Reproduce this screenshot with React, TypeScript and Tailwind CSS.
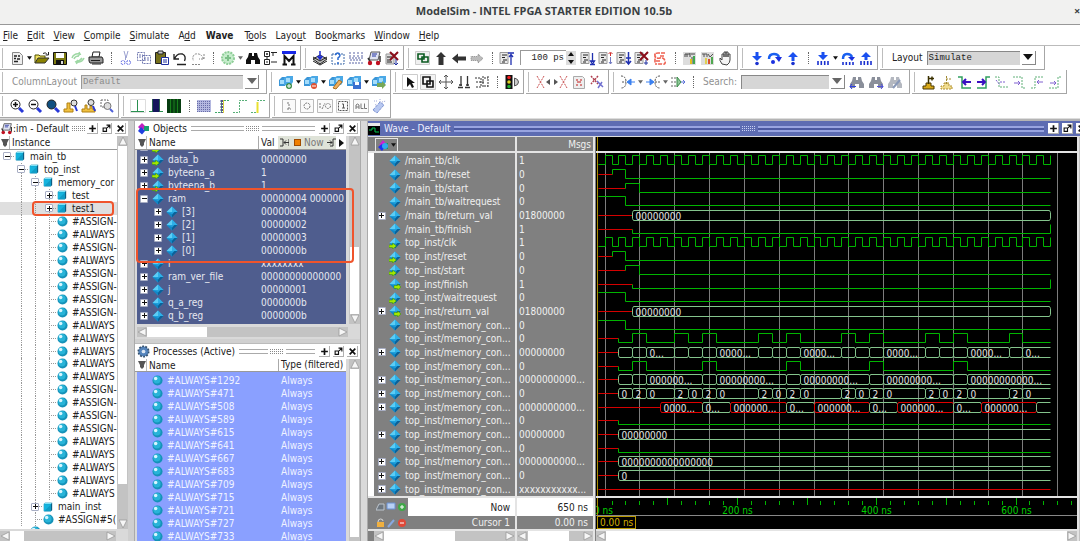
import React from "react";

/* ---------- small drawings ---------- */

const Svg = ({ children, size = 16 }: { children: React.ReactNode; size?: number }) => (
  <svg viewBox="0 0 16 16" width={size} height={size} fill="none" className="shrink-0">
    {children}
  </svg>
);

const Diamond = ({ port }: { port?: "in" | "out" }) => (
  <svg viewBox="0 0 12 12" width="12" height="12" className="shrink-0">
    <path d="M6 .5 11.5 6 6 11.5 .5 6Z" fill="#1ea0dc" />
    <path d="M6 .5 6 6 .5 6Z" fill="#5ccdf5" />
    <path d="M6 .5 11.5 6 6 6Z" fill="#2fb0e8" />
    <path d="M11.5 6 6 11.5 6 8.5 8.5 6Z" fill="#0b5f96" />
    <path d="M.5 6 6 11.5 6 8Z" fill="#1286c4" />
    {port === "in" && <path d="M0 8h3.500V6L7.500 9 3.500 12V10.500H0Z" fill="#a4e800" stroke="#2e8a10" strokeWidth=".5" />}
    {port === "out" && <path d="M5 7.500h3.500V6L12 9 8.500 12V10.500H5Z" fill="#a4e800" stroke="#2e8a10" strokeWidth=".5" />}
  </svg>
);

const Ball = () => (
  <svg viewBox="0 0 12 12" width="11" height="11" className="shrink-0">
    <circle cx="6" cy="6" r="5.5" fill="#1592b8" />
    <circle cx="5.4" cy="5.2" r="4" fill="#28b4d8" />
    <circle cx="4" cy="3.8" r="1.9" fill="#d8f6ff" />
  </svg>
);

const Cube = () => (
  <svg viewBox="0 0 12 12" width="10" height="10" className="shrink-0">
    <path d="M1 2 2.500 1H11v9l-1.500 1H1Z" fill="#0d5f84" />
    <path d="M1 2.500h8.500V11H1Z" fill="#16b4de" />
    <path d="M1 2.500 2.500 1H11L9.500 2.500Z" fill="#7fe2f8" />
    <path d="M9.500 3 1.500 11h8Z" fill="#0f9cc6" />
  </svg>
);

const Doc = ({ x = 2 }: { x?: number }) => (
  <>
    <path d={`M${x} 2.500h8v11h-8z`} fill="#e9e9e9" stroke="#999" />
    <path d={`M${x + 2} 5h5M${x + 2} 7.500h3M${x + 3} 10h4M${x + 2} 12h3`} stroke="#222" />
  </>
);
const Bino = ({ c }: { c: string }) => (
  <path d="M4 3h3v3h2V3h3l1 4 2 3v4h-5v-4H6v4H1v-4l2-3Z" fill={c} />
);
const Lens = ({ fill = "#fff" }: { fill?: string }) => (
  <>
    <path d="M10 10l4 4" stroke="#2838d8" strokeWidth="3" />
    <circle cx="6.500" cy="6.500" r="4.500" fill={fill} stroke="#222" />
  </>
);
const Cubes = () => (
  <>
    <path d="M1 6 4 3h5v6l-2 3H1Z" fill="#3a96d8" />
    <path d="M6 4l3-2h6v6l-2 3H6Z" fill="#4aa8e6" />
    <path d="M2 6h4v4H2zM8 4h4v4H8z" fill="#a4dcfa" />
  </>
);
const Edge = ({ c, d }: { c: string; d?: boolean }) => (
  <path d="M1 14.500h6.500V2.500H15" stroke={c} strokeDasharray={d ? "2 1" : undefined} />
);

const icons: Record<string, React.ReactNode> = {
  "New": <><path d="M3.500 2.500h7l3 3v9h-10z" fill="#eee" stroke="#888" /><path d="M5 6h3M9 6h2M5 8.500h2M8 9h3M5 11.500h4" stroke="#222" strokeWidth="1.500" /></>,
  "Open": <><path d="M1 13V5h4l1 1h5v2" stroke="#555500" fill="#f0e060" /><path d="M1 13l3-5h11l-4 5Z" fill="#8a8200" stroke="#333" /><path d="M9 3.500q3-2 4 1M11.500 5h3V2" stroke="#222" /></>,
  "Save": <><path d="M1.500 2.500h13v12h-13z" fill="#7c7a10" stroke="#111" /><path d="M4 3h8v5H4z" fill="#fff" /><path d="M4 10h8v4H4z" fill="#111" /><path d="M9 11h2v3H9z" fill="#ddd" /></>,
  "Reload": <path d="M2 8q2-5 8-4l-1-2M10 4l-2 2M14 8q-2 5-8 4l1 2M6 12l2-2M4 9q1-3 5-3M12 8q-2 3-5 3" stroke="#9ed8a4" strokeWidth="1.500" />,
  "Print": <><path d="M5 2h7l-1 5H4Z" fill="#fff" stroke="#222" /><path d="M1 7h13l1 2v4H2l-1-2Z" fill="#999" stroke="#222" /><path d="M3 10.500h9M4 14h9" stroke="#222" /></>,
  "Cut": <><path d="M6 1l2 7 2-7M7.500 7v3" stroke="#9aa0d0" /><circle cx="5" cy="12.500" r="2" stroke="#5560e0" strokeDasharray="2 1" /><circle cx="10.500" cy="12.500" r="2" stroke="#5560e0" strokeDasharray="2 1" /></>,
  "Copy": <path d="M1.500 2.500h7v8h-7zM6.500 5.500h8v8h-8zM3 5h4M3 7h3M8 8h5M8 10h5" stroke="#7078b0" strokeDasharray="2 1" />,
  "Paste": <><path d="M1.500 2.500h10v11h-10z" fill="#76701c" stroke="#222" /><path d="M4 1h5v3H4z" fill="#ccc" stroke="#222" /><path d="M7.500 7.500h7v7h-7z" fill="#fff" stroke="#2030a0" /><path d="M9 10h4M9 12h4" stroke="#2030a0" /></>,
  "Undo": <path d="M2 4v5h5M2.500 9q2-6 8-5 4 2 2 7M5 14.500h9" stroke="#222" strokeWidth="1.300" />,
  "Redo": <path d="M14 4v5H9M13.500 9q-2-6-8-5-4 2-2 7M2 14.500h9" stroke="#888" strokeDasharray="2 1" />,
  "Add": <><circle cx="8" cy="8" r="6" fill="#c5eccb" stroke="#8fce98" strokeDasharray="2 1" strokeWidth="2" /><path d="M8 5v6M5 8h6" stroke="#7cc088" strokeWidth="2" /></>,
  "Find": <Bino c="#111" />,
  "Expand hierarchy": <path d="M1.500 1.500h5v5h-5zM1.500 9.500h5v5h-5zM4 3v2M3 4h2M3 12h2M4 6v3M8 2.500h6M8 12h6M10 2v4" stroke="#222" />,
  "ModelSim": <><path d="M1 2.500h14" stroke="#1828e8" strokeWidth="3" /><path d="M3.500 14V6l4.500 5 4.500-5v8M1.500 14.500h4.500M10 14.500h4.500" stroke="#111" strokeWidth="2" /></>,
  "Compile": <><path d="M1 9l7-4 7 4-7 5Z" fill="#bbb" stroke="#222" /><path d="M1 11l7 4 7-4M1 7l7 4 7-4" stroke="#222" /><path d="M8 1v7M5.500 6 8 9l2.500-3" stroke="#1a28d0" strokeWidth="1.500" /></>,
  "Compile out of date": <><path d="M2 4h12v10H2z" stroke="#3b68a8" strokeDasharray="2 1" /><path d="M5 5q3-4 5 0 0 2-2 3v2M8 12v2" stroke="#2a6ad0" strokeWidth="1.500" /></>,
  "Compile all": <path d="M2 2v5M6 2v5M10 2v5M14 2v5M1 8h14M2 10h12M1 13h14" stroke="#5a65a5" strokeDasharray="2 1" />,
  "Simulate": <><path d="M5 2h9l-2 8H3Z" fill="#dfe3f2" stroke="#555" /><path d="M6 4h5M6 6h4" stroke="#2030a0" /><path d="M2 8l3 5M14 6v6" stroke="#333" strokeWidth="1.500" /><circle cx="4" cy="13" r="2.200" fill="#c01020" /><circle cx="12" cy="13" r="2.200" fill="#c01020" /></>,
  "End simulation": <><path d="M2 4h8v10H2z" fill="#ddd" stroke="#999" /><path d="M3 7h5M3 10h4M3 12h5" stroke="#222" /><path d="M6 2l8 8M14 2l-8 8" stroke="#8a0c18" strokeWidth="2" /><path d="M12 9v6M10 13l2 2 2-2" stroke="#2030a0" /></>,
  "Restart": <><path d="M.5 1.500h14v13H.5z" fill="#f0f0f0" stroke="#ccc" /><path d="M3 4h6v5H3zM7 7h6v5H7z" stroke="#0a5a20" strokeWidth="1.600" /></>,
  "Environment up": <path d="M8 2l5 5h-2.500v8h-5V7H3Z" fill="#333" />,
  "Back": <path d="M1 8.500l6-5v3h8v4H7v3Z" fill="#333" />,
  "Forward": <path d="M14 8.500l-5-4.500v2.500H2v4h7V13Z" fill="#bbb" stroke="#888" strokeDasharray="1 1" />,
  "Run length": <><Doc x={1} /><path d="M9 3h6M12 4v11M10 7l2-2.500 2 2.500" stroke="#2030b0" strokeWidth="1.300" /></>,
  "Run": <><Doc x={1} /><path d="M12.500 3v9M10 14.500h5M12.500 14l-2-3h4Z" stroke="#2030b0" strokeWidth="1.300" /></>,
  "Continue": <><Doc x={1} /><path d="M10.500 4l2-2 2 2M12.500 3v3" stroke="#d03030" /><path d="M12.500 7v7M11 12l1.500 2 1.500-2" stroke="#7078c0" /></>,
  "Run all": <><Doc x={1} /><path d="M12.500 2v12M10 11l2.500 3 2.500-3M10 8h5" stroke="#2030b0" strokeWidth="1.500" /></>,
  "Break": <><Doc x={1} /><path d="M6 2l8 8M14 2l-8 8" stroke="#8a0c18" strokeWidth="2" /><path d="M12 10v5M10 13h4" stroke="#2030a0" /></>,
  "Stop": <path d="M13 3H6Q2 3 3 6t5 2 5 3-3 3H3M12 6H7M4 11h5M3 3.500v10" stroke="#ee6050" strokeWidth="1.600" strokeDasharray="4 1" />,
  "Profile": <><path d="M1 2h13v13H1z" fill="#ddd" /><path d="M3 4v3M5 4v3M8 3v4M3 4h5M9 4h4M10 7v7" stroke="#444" /><path d="M8 9h2v5H8z" fill="#e0c020" /><path d="M11 6h2v8h-2z" fill="#40a850" /></>,
  "Memory profile": <><path d="M1 2h13v13H1z" fill="#ddd" /><path d="M2 4h5v3M4 4v3M8 4l2 3 3-3" stroke="#555" /><path d="M8 9h2v5H8z" fill="#d85030" /><path d="M11 7h2v7h-2z" fill="#50a850" /><path d="M5 8h2v6H5z" fill="#e0d050" /></>,
  "Pan": <path d="M4 14q-3-4-2-6l2 2V4h2v3V2h2v5V2h2v5V4h2v6q0 3-3 5Z" fill="#f4f4f4" stroke="#444" />,
  "Step into": <><path d="M6.500 2h3v4H13l-5 5-5-5h3.500Z" fill="#1a50f0" /><circle cx="8" cy="13.500" r="1.800" fill="#1a30d0" /></>,
  "Step over": <><path d="M2 9q0-5 5-5 4 0 5 3" stroke="#1a60f0" strokeWidth="2.500" /><path d="M8 7h7l-3 5Z" fill="#1a30e0" /><circle cx="6" cy="12" r="2" fill="#1a30e0" /></>,
  "Step out": <><path d="M8 2l5 5H9.500v4h-3V7H3Z" fill="#1a50f0" /><circle cx="8" cy="13.500" r="1.800" fill="#1a30d0" /></>,
  "Step into instance": <><path d="M6.500 2h3v3H13L8 10 3 5h3.500Z" fill="#1a50f0" /><path d="M3 11v4M6.300 11v4M9.700 11v4M13 11v4" stroke="#1a30d0" strokeWidth="1.600" /></>,
  "Step over instance": <><path d="M3 9q0-5 4-5 4 0 5 3" stroke="#1a60f0" strokeWidth="2.500" /><path d="M8 7h7l-3 4Z" fill="#1a30e0" /><path d="M3 12v3M6.300 12v3M9.700 12v3M13 12v3" stroke="#1a30d0" strokeWidth="1.600" /></>,
  "Step out instance": <><path d="M8 2l5 5H9.500v3h-3V7H3Z" fill="#1a50f0" /><path d="M3 11v4M6.300 11v4M9.700 11v4M13 11v4" stroke="#1a30d0" strokeWidth="1.600" /></>,
  "Add layer": <><Cubes /><circle cx="11" cy="12" r="3" fill="#3c8c48" /><path d="M11 10v4M9 12h4" stroke="#fff" /></>,
  "Remove layer": <><Cubes /><circle cx="11" cy="12" r="3" fill="#e05030" /><path d="M9 12h4" stroke="#fff" /></>,
  "Edit layer": <><Cubes /><path d="M5 14l6-8 3 2-6 7Z" fill="#f0b060" stroke="#a87020" /></>,
  "Save layer": <><Cubes /><path d="M7 8h8v7H7z" fill="#3a70d0" /><path d="M9 8h4v3H9z" fill="#fff" /></>,
  "Load layer": <><Cubes /><path d="M6 9h5V7l4 4-4 4v-2H6Z" fill="#78a858" /></>,
  "Select": <><path d="M.5.500h15v15H.5z" fill="#fff" stroke="#ccc" /><path d="M5 3v10l3-3 2 4 2-1-2-4h3Z" fill="#111" /></>,
  "Zoom area": <><path d="M.5.500h15v15H.5z" fill="#f2f2f2" stroke="#ccc" /><path d="M3 3h7v7H3zM7 7h6v6H7z" stroke="#111" strokeWidth="1.600" /></>,
  "Move": <path d="M8 1v14M1 8h14M6 3l2-2 2 2M6 13l2 2 2-2M3 6 1 8l2 2M13 6l2 2-2 2" stroke="#555" />,
  "Cursors": <path d="M5 2v10M11.500 2v10M2 13.500h5M9 13.500h5M3 11h3M10 11h3" stroke="#333" strokeWidth="1.300" />,
  "Stretch": <path d="M1 4h6v9H1M2 8h9M9 2v12M14 2v12M10 4h4M10 12h4" stroke="#333" strokeDasharray="2 1" />,
  "Stop wave": <><path d="M1.500 1h7v14h-7z" fill="#111" /><circle cx="5" cy="3.500" r="1.800" fill="#f02020" /><circle cx="5" cy="8" r="1.800" fill="#e0d020" /><circle cx="5" cy="12.500" r="1.800" fill="#20b030" /><path d="M10.500 4v8q4-1 4-4t-4-4Z" stroke="#555" fill="#ccc" /></>,
  "X previous": <><path d="M2 2l7 12M9 2 2 14" stroke="#c85050" strokeDasharray="2 1" /><path d="M15 5v6l-4-3Z" fill="#555" /></>,
  "X next": <><path d="M7 2l7 12M14 2 7 14" stroke="#c85050" strokeDasharray="2 1" /><path d="M1 5v6l4-3Z" fill="#555" /></>,
  "Show X": <><path d="M2.500 2.500h9l2 2v10h-11z" fill="#eee" stroke="#aaa" /><path d="M5 6h2M9 6h2M6 8h4M5 11h2M9 11h2" stroke="#d06060" strokeWidth="1.500" /></>,
  "X options": <><path d="M2 2l7 8M9 2 2 10" stroke="#b04050" strokeDasharray="2 1" strokeWidth="1.500" /><path d="M8 7l6 6M13 8l-4 6" stroke="#7070d0" strokeWidth="1.500" /></>,
  "Expand drivers": <><path d="M1 2q5 0 5 6t-5 6M2 8h4" stroke="#555" strokeDasharray="2 1" /><path d="M7 8l4-3v6ZM10 8h5" stroke="#3a80f0" fill="#3a80f0" /></>,
  "Expand readers": <><path d="M15 2q-5 0-5 6t5 6M10 8h5" stroke="#555" strokeDasharray="2 1" /><path d="M9 8 5 5v6ZM1 8h5" stroke="#3a80f0" fill="#3a80f0" /></>,
  "Expand both": <><path d="M1 4h5M1 8h5M1 12h5" stroke="#666" strokeDasharray="2 1" /><path d="M7 3v10l4-5Z" fill="#8ec898" stroke="#3a8a48" /><path d="M11 8h4M13 6l2 2-2 2" stroke="#5a70d8" /></>,
  "Find previous": <><Bino c="#8a8f9a" /><path d="M1 12.500h6M3 10l-2 2.500L3 15" stroke="#3040e0" /></>,
  "Find next": <><Bino c="#8a8f9a" /><path d="M9 12.500h6M13 10l2 2.500-2 2.500" stroke="#5050e0" /></>,
  "Find options": <><Bino c="#b4b8c0" /><path d="M6 14l7-8" stroke="#8898b8" strokeWidth="2" /></>,
  "Insert cursor": <><path d="M5 9h5v3h3v3H2v-3h3Z" fill="#d8a818" stroke="#4a3800" /><path d="M7.500 2v8M7 4.500h6M11 2.500v4" stroke="#3a3000" strokeWidth="1.500" /></>,
  "Delete cursor": <><path d="M5 9h5v3h3v3H2v-3h3Z" fill="#f0dc90" stroke="#b09030" strokeDasharray="2 1" /><path d="M7.500 2v8M7 5h6" stroke="#a08830" strokeDasharray="2 1" /></>,
  "Previous transition": <><path d="M1 3h4v11h9" stroke="#30a060" strokeWidth="1.500" /><path d="M6 8h8M9 5 6 8l3 3" stroke="#3a10c0" strokeWidth="2" /></>,
  "Next transition": <><path d="M15 3h-4v11H2" stroke="#30a060" strokeWidth="1.500" /><path d="M2 8h8M7 5l3 3-3 3" stroke="#3a10c0" strokeWidth="2" /></>,
  "Previous falling": <><path d="M2 3h4v10h9" stroke="#60b078" strokeDasharray="2 1" /><path d="M7 8h6M3 6l4 5" stroke="#8060d0" strokeDasharray="2 1" /></>,
  "Next falling": <><path d="M2 3h9v11h4" stroke="#60b078" strokeDasharray="2 1" /><path d="M3 9h6M7 7l2 2-2 2" stroke="#8060d0" /></>,
  "Previous rising": <><path d="M2 14h4V3h9" stroke="#60b078" strokeDasharray="2 1" /><path d="M8 8h6M10 6 8 8l2 2" stroke="#8060d0" /></>,
  "Next rising": <><path d="M2 14h9V3h4" stroke="#60b078" strokeDasharray="2 1" /><path d="M3 9h6M7 7l2 2-2 2" stroke="#8060d0" /></>,
  "Zoom in": <><Lens /><path d="M4 6.500h5M6.500 4v5" stroke="#111" strokeWidth="1.500" /></>,
  "Zoom out": <><Lens /><path d="M4 6.500h5" stroke="#111" strokeWidth="1.500" /></>,
  "Zoom full": <Lens fill="#0f4f80" />,
  "Zoom cursor": <><path d="M1 14h9v-3H7V5H4v6H1Z" fill="#f0c040" stroke="#b08010" /><circle cx="11" cy="5" r="3" stroke="#333" fill="#ddd" /><path d="M12 8l2 5" stroke="#2838d8" strokeWidth="2" /></>,
  "Zoom range": <><path d="M1 14h13v-3h-3V8H9v3H6V7H4v4H1Z" fill="#f0c040" stroke="#b08010" /><circle cx="10" cy="4.500" r="3" stroke="#333" fill="#ddd" /><path d="M12 8l2 5" stroke="#2838d8" strokeWidth="2" /></>,
  "Zoom selection": <><path d="M2 2h7v7H2z" stroke="#666" strokeDasharray="2 1" /><circle cx="8.500" cy="8" r="3.500" stroke="#777" fill="#ddd" /><path d="M11 11l3 3" stroke="#5060d8" strokeWidth="2" /></>,
  "Wave none": <><path d="M.5 1.500h15v13H.5z" fill="#fff" stroke="#ddd" /><path d="M1 13.500h13M7.500 2v12" stroke="#2a9050" /></>,
  "Wave block": <><path d="M1 13.500h14" stroke="#2a9050" /><path d="M4 1h8v13H4z" fill="#14145c" /><path d="M4.500 1v13M11.500 1v13" stroke="#2a6050" /></>,
  "Wave bars": <><path d="M1 1h14v14H1z" fill="#063c10" /><path d="M4.500 1v14M8 1v14M11.500 1v14" stroke="#18801c" /></>,
  "Pattern": <><path d="M1 2h14v12H1z" fill="#b4b8e0" /><path d="M1 3.500h14M1 5.500h14M1 7.500h14M1 9.500h14M1 11.500h14M1 13.500h14" stroke="#676ca8" strokeDasharray="1 1" /></>,
  "Edge pair": <><Edge c="#40a868" d /><path d="M8 2v13" stroke="#55558a" strokeWidth="3" strokeDasharray="2 1" /><path d="M9.500 2v13" stroke="#d8d040" /></>,
  "Edge rising": <Edge c="#58b078" d />,
  "Edge marked": <><Edge c="#58b078" d /><path d="M7.500 4v11" stroke="#e8e030" strokeWidth="2" /></>,
  "Inputs": <><path d="M1.500 1.500h13v13h-13z" fill="#fafafa" stroke="#bbb" /><path d="M6 5h2v6M6 11h4" stroke="#777" strokeDasharray="2 1" /></>,
  "Outputs": <><path d="M1.500 1.500h13v13h-13z" fill="#fafafa" stroke="#bbb" /><circle cx="8" cy="8" r="3" stroke="#777" strokeDasharray="2 1" /></>,
  "Inouts": <><path d="M.5 1.500h15v13H.5z" fill="#fafafa" stroke="#bbb" /><path d="M3 5v6M5 11l3-6" stroke="#777" strokeDasharray="2 1" /><circle cx="11" cy="8" r="2.500" stroke="#777" strokeDasharray="2 1" /></>,
  "Internals": <><path d="M1.500 1.500h13v13h-13z" fill="#fafafa" stroke="#ccc" /><path d="M3.500 3.500h9v9h-9z" stroke="#555" strokeDasharray="2 1" /><path d="M7 6h1.500v4M7 10h3" stroke="#555" /></>,
  "All": <><path d="M.5 1.500h15v13H.5z" fill="#fafafa" stroke="#bbb" /><path d="M3 11V7l1.500-1L6 7v4M3 9h3M8 5.500v5h2.500M11.500 5.500v5h2.500" stroke="#777" /></>,
  "Clear filter": <><path d="M2 12l7-8 4 3-7 8Z" fill="#b8c8f0" stroke="#7a90d0" strokeDasharray="3 1" /><path d="M3 3h3M9 1v3M11 4l4-1M4 7l2-1" stroke="#a0a8d8" strokeDasharray="1 1" /></>,
};

const Tool = ({ n }: { n: string }) => (
  <button title={n} className="flex h-[18px] w-[18px] shrink-0 items-center justify-center">
    <Svg>{icons[n]}</Svg>
  </button>
);
const Tools = ({ names }: { names: string[] }) => <>{names.map((n) => <Tool key={n} n={n} />)}</>;

const Caret = ({ c = "#111" }: { c?: string }) => (
  <span className="flex w-[7px] shrink-0 justify-center">
    <svg viewBox="0 0 6 4" width="5" height="4"><path d="M0 0h6L3 4Z" fill={c} /></svg>
  </span>
);
const Sep = () => (
  <span className="flex w-[12px] shrink-0 justify-center">
    <span className="h-[12px] w-px border-l border-dotted border-[#666]" />
  </span>
);
const Group = ({ children }: { children: React.ReactNode }) => (
  <div className="flex shrink-0 items-center border-r border-b border-[#a6a6a6] bg-white pr-[2px]">
    <span className="mr-[5px] h-[20px] w-[3px] shrink-0 border-r border-[#bdbdbd]" />
    {children}
  </div>
);
const DropArrow = ({ c = "#111" }: { c?: string }) => (
  <span className="pointer-events-none ml-[2px] flex h-[14px] w-[14px] shrink-0 items-center justify-center border-r border-b border-[#888] bg-white">
    <svg viewBox="0 0 10 6" width="10" height="6"><path d="M0 0h10L5 6Z" fill={c} /></svg>
  </span>
);

/* ---------- panel pieces ---------- */

const PanelButtons = () => (
  <span className="flex shrink-0 items-center gap-[3px]">
    {["M8 2v12M2 8h12", "M2 7h6v6H2zM8 2h6v6M14 2 9 7", "M3 3l10 10M13 3 3 13"].map((d, i) => (
      <button key={d} title={["Maximize", "Undock", "Close"][i]} className="flex h-[11px] w-[11px] items-center justify-center border-r border-b border-[#b0b0b0] bg-white">
        <Svg size={9}><path d={d} stroke="#111" strokeWidth={i === 1 ? 2 : 3} /></Svg>
      </button>
    ))}
  </span>
);

const Dots = ({ light }: { light?: boolean }) => (
  <svg width="14" height="5" className="shrink-0">
    {[0.5, 2.5, 4.5].map((y) => (
      <path key={y} d={`M0 ${y}h14`} stroke={light ? "#c8d0f4" : "#888"} strokeDasharray="1 1" />
    ))}
  </svg>
);
const Grip = ({ light }: { light?: boolean }) => {
  const bar = light ? "h-[6px] flex-1 border-y-2 border-[#98a4e0] bg-[#4a58a0]" : "h-[5px] flex-1 border-y border-[#aaa]";
  return (
    <span className="mx-[4px] flex flex-1 items-center gap-[2px]">
      <span className={bar} />
      <Dots light={light} />
      <span className={bar} />
    </span>
  );
};

const Arrow = ({ d }: { d: "up" | "down" | "left" | "right" }) => {
  const p = { up: "M5 1l4 8H1Z", down: "M5 9 1 1h8Z", left: "M1 5l8-4v8Z", right: "M9 5 1 1v8Z" }[d];
  return (
    <svg viewBox="0 0 10 10" width="10" height="10" className="shrink-0">
      <path d={p} fill="#f6f6f6" stroke="#999" strokeWidth=".8" />
    </svg>
  );
};
const HBar = ({ thumb }: { thumb: string }) => (
  <div className="flex h-[10px] shrink-0 items-center bg-[#c3c3c3]">
    <Arrow d="left" />
    <span className="flex h-full flex-1"><span className={thumb} /></span>
    <Arrow d="right" />
  </div>
);

const Expander = ({ open }: { open?: boolean }) => (
  <span className="flex h-[8px] w-[8px] shrink-0 items-center justify-center rounded-[1px] border border-[#a8aec4] bg-white">
    <svg width="5" height="5"><path d={open ? "M0 2.5h5" : "M0 2.5h5M2.5 0v5"} stroke="#111" /></svg>
  </span>
);
const FilterBox = () => (
  <span className="mr-[2px] flex h-full w-[10px] shrink-0 items-center justify-center border-r border-[#bbb]">
    <svg viewBox="0 0 8 8" width="8" height="8"><path d="M0 0h8L6 4v2L4 8 2 6V4Z" fill="#555" /></svg>
  </span>
);

/* ---------- data ---------- */

type Node = { t: string; d: number; k: "o" | "c" | "l"; sel?: boolean };
const proc = "SLSLSSSSLLLLLSSSSLLLLL".split("").map((c): Node => ({ t: c === "S" ? "#ASSIGN-" : "#ALWAYS", d: 3, k: "l" }));
const tree: Node[] = [
  { t: "main_tb", d: 0, k: "o" },
  { t: "top_inst", d: 1, k: "o" },
  { t: "memory_cor", d: 2, k: "o" },
  { t: "test", d: 3, k: "c" },
  { t: "test1", d: 3, k: "c", sel: true },
  ...proc,
  { t: "main_inst", d: 2, k: "c" },
  { t: "#ASSIGN#5(", d: 2, k: "l" },
];

const objects: [string, string, number, boolean?][] = [
  ["data_a", "00000000", 0, true],
  ["data_b", "00000000", 0, true],
  ["byteena_a", "1", 0, true],
  ["byteena_b", "1", 0, true],
  ["ram", "00000004 000000", 0],
  ["[3]", "00000004", 1],
  ["[2]", "00000002", 1],
  ["[1]", "00000003", 1],
  ["[0]", "0000000b", 1],
  ["i", "xxxxxxxx", 0],
  ["ram_ver_file", "00000000000000", 0],
  ["j", "00000001", 0],
  ["q_a_reg", "0000000b", 0],
  ["q_b_reg", "0000000b", 0],
];

const processes = [1292, 471, 508, 589, 615, 641, 667, 683, 709, 715, 721, 727, 733];

type Seg = [number, string, string?];
type Signal = { n: string; v: string; x?: boolean; port?: "in" | "out"; kind: "bit" | "bus" | "clk" | "x"; s: Seg[] };

const mem = "top_inst/memory_con...";
const high = (...r: number[]): Seg[] => {
  const out: Seg[] = [[30, "x"]];
  r.forEach((t) => { out.push([t, "0"]); out.push([t + 20, "1"]); });
  out.push([650, "0"]);
  return out;
};
const boxes = (start: number, list: [number, string][]): Seg[] => [[start, "x"], ...list.map(([t, l]): Seg => [t, "b", l])];
const rst: Seg[] = [[20, "x"], [40, "1"], [650, "0"]];
const sta: Seg[] = [[40, "x"], [60, "1"], [650, "0"]];
const wai: Seg[] = [[40, "1"], [650, "0"]];
const fin: Seg[] = [[50, "x"], [649, "0"], [650, "1"]];
const ret = boxes(50, [[650, "00000000"]]);
const low: Seg[] = [[30, "x"], [650, "0"]];

const signals: Signal[] = [
  { n: "/main_tb/clk", v: "1", kind: "clk", s: [] },
  { n: "/main_tb/reset", v: "0", kind: "bit", s: rst },
  { n: "/main_tb/start", v: "0", kind: "bit", s: sta },
  { n: "/main_tb/waitrequest", v: "0", kind: "bit", s: wai },
  { n: "/main_tb/return_val", v: "01800000", x: true, kind: "bus", s: ret },
  { n: "/main_tb/finish", v: "1", kind: "bit", s: fin },
  { n: "top_inst/clk", v: "1", port: "in", kind: "clk", s: [] },
  { n: "top_inst/reset", v: "0", port: "in", kind: "bit", s: rst },
  { n: "top_inst/start", v: "0", port: "in", kind: "bit", s: sta },
  { n: "top_inst/finish", v: "1", port: "out", kind: "bit", s: fin },
  { n: "top_inst/waitrequest", v: "0", port: "in", kind: "bit", s: wai },
  { n: "top_inst/return_val", v: "01800000", x: true, port: "out", kind: "bus", s: ret },
  { n: mem, v: "0", kind: "bit", s: wai },
  { n: mem, v: "0", kind: "bit", s: high(50, 110, 150, 230, 270, 350, 390, 470, 510, 590) },
  { n: mem, v: "00000000", x: true, kind: "bus", s: boxes(30, [[50, ""], [70, ""], [110, "0..."], [130, ""], [150, ""], [170, ""], [230, "0000..."], [250, ""], [270, ""], [290, ""], [350, "0000..."], [370, ""], [390, ""], [410, ""], [470, "0000..."], [490, ""], [510, ""], [530, ""], [590, "0000..."], [610, ""], [660, "0..."]]) },
  { n: mem, v: "0", kind: "bit", s: high(50, 150, 270, 390, 510) },
  { n: mem, v: "0000000000...", x: true, kind: "bus", s: boxes(30, [[50, ""], [70, ""], [150, "000000..."], [170, ""], [270, "00000000..."], [290, ""], [390, "00000000..."], [410, ""], [510, "00000000..."], [530, ""], [660, "00000000000..."]]) },
  { n: mem, v: "0", x: true, kind: "bus", s: boxes(30, [[50, "0"], [70, "2"], [110, "0"], [130, "2"], [150, "0"], [170, "2"], [230, "0"], [250, "2"], [270, "0"], [290, "2"], [350, "0"], [370, "2"], [390, "0"], [410, "2"], [470, "0"], [490, "2"], [510, "0"], [530, "2"], [590, "0"], [610, "2"], [660, "0"]]) },
  { n: mem, v: "0000000000...", x: true, kind: "bus", s: [[90, "x"], [150, "r", "0000..."], [190, "b", "0..."], [270, "r", "000000..."], [310, "b", "0..."], [390, "r", "000000..."], [430, "b", "0..."], [510, "r", "000000..."], [550, "b", "0..."], [630, "r", "000000..."], [660, "b", ""]] },
  { n: mem, v: "0", kind: "bit", s: low },
  { n: mem, v: "00000000", x: true, kind: "bus", s: boxes(30, [[660, "00000000"]]) },
  { n: mem, v: "0", kind: "bit", s: low },
  { n: mem, v: "0000000000...", x: true, kind: "bus", s: boxes(30, [[660, "0000000000000000"]]) },
  { n: mem, v: "0", x: true, kind: "bus", s: boxes(30, [[660, "0"]]) },
  { n: mem, v: "xxxxxxxxxxx...", x: true, kind: "x", s: [[650, "x"]] },
];

/* ---------- waveforms ---------- */

const PITCH = 342 / 25;
const tx = (ns: number) => Math.round(1.6 + ns * 0.6965) + 0.5;
const green = "#00b400";

const Trace = ({ sig, row }: { sig: Signal; row: number }) => {
  const c = Math.round(7.4 + row * PITCH) + 0.5;
  const hi = c - 5;
  const lo = c + 4;
  if (sig.kind === "clk") {
    let d = `M${tx(0)} ${lo}`;
    for (let t = 10; t <= 650; t += 10) d += `H${tx(t)}V${(t / 10) % 2 ? hi : lo}`;
    return <path d={d} stroke={green} />;
  }
  const out: React.ReactNode[] = [];
  let from = 0;
  let prev: number | null = null;
  sig.s.forEach(([end, k, label], i) => {
    const to = Math.min(end, 650);
    const a = tx(from);
    const b = tx(to);
    if (k === "x") {
      out.push(<path key={i} d={`M${a} ${c}H${b}`} stroke="#d40000" />);
      prev = c;
    } else if (k === "0" || k === "1") {
      const y = k === "1" ? hi : lo;
      out.push(<path key={i} d={prev === null ? `M${a} ${y}H${b}` : `M${a} ${prev}V${y}H${b}`} stroke={green} />);
      prev = y;
    } else {
      const open = end > 650;
      const shape = open ? `M${b} ${hi}H${a + 1}L${a} ${hi + 2}V${lo - 1}L${a + 1} ${lo + 1}H${b}` : `M${a + 1} ${hi}H${b - 1}L${b} ${hi + 2}V${lo - 1}L${b - 1} ${lo + 1}H${a + 1}L${a} ${lo - 1}V${hi + 2}Z`;
      out.push(
        <g key={i}>
          <path d={shape} stroke={k === "r" ? "#e00000" : "#84c48c"} />
          {label && <text x={a + 3} y={c + 4} fill="#e4e4e4">{label}</text>}
        </g>
      );
    }
    from = to;
  });
  return <g>{out}</g>;
};

const Waves = () => (
  <svg className="block h-full w-full text-[10px]" fill="none">
    {Array.from({ length: 14 }, (_, i) => (
      <path key={i} d={`M${tx(10 + i * 50)} 0V400`} stroke="#7c7c7c" />
    ))}
    {signals.map((s, i) => <Trace key={i} sig={s} row={i} />)}
    <path d="M1.500 0V400" stroke="#a88c00" />
  </svg>
);

const Ruler = () => (
  <svg className="block h-full w-full text-[10px]" fill="none">
    {Array.from({ length: 34 }, (_, i) => (i + 1) * 20).map((t) => (
      <path key={t} d={`M${tx(t)} ${t % 100 ? 3 : 0}v${t % 100 ? 4 : 7}`} stroke={green} />
    ))}
    <text x="-2" y="16" fill="#00d000">0 ns</text>
    {[200, 400, 600].map((t) => (
      <text key={t} x={tx(t)} y="16" textAnchor="middle" fill="#00d000">{t} ns</text>
    ))}
    <path d="M1.500 0V20" stroke="#a88c00" />
  </svg>
);

/* ---------- page ---------- */

const menus: [string, string, string][] = [
  ["", "F", "ile"], ["", "E", "dit"], ["", "V", "iew"], ["", "C", "ompile"], ["", "S", "imulate"], ["A", "d", "d"],
  ["W", "", "ave"], ["T", "o", "ols"], ["Layo", "u", "t"], ["Boo", "k", "marks"], ["", "W", "indow"], ["", "H", "elp"],
];

const indent = ["", "pl-[14px]"];

export default function App() {
  return (
    <div className="flex h-screen min-h-[541px] w-full flex-col overflow-hidden bg-white font-['DejaVu_Sans_Condensed','DejaVu_Sans',sans-serif] text-[10px] leading-[13px] text-[#222]">
      <header className="flex h-[25px] shrink-0 items-center border-b border-[#989898] bg-[#f1f1f0] font-['Open_Sans','Noto_Sans',sans-serif] text-[11px] font-bold text-[#3a3f42]">
        <h1 className="flex-1 pb-[4px] pl-[14px] text-center">ModelSim - INTEL FPGA STARTER EDITION 10.5b</h1>
        <button title="Close window" className="w-[6px] overflow-hidden pb-[4px]">×</button>
      </header>

      <nav className="flex h-[21px] shrink-0 items-center border-b border-[#bbb] pl-[3px]">
        {menus.map(([a, u, b]) => (
          <button key={a + u + b} className={b === "ave" ? "mr-[11px] ml-px font-bold" : "mr-[9px]"}>{a}<u>{u}</u>{b}</button>
        ))}
      </nav>

      <div className="flex h-[24px] shrink-0 gap-[2px]">
        <Group>
          <Tools names={["New"]} /><Caret /><Tools names={["Open", "Save", "Reload", "Print"]} /><Sep />
          <Tools names={["Cut", "Copy", "Paste", "Undo", "Redo"]} /><Sep />
          <Tools names={["Add"]} /><Caret c="#666" /><Tools names={["Find", "Expand hierarchy", "ModelSim"]} />
        </Group>
        <Group><Tools names={["Compile", "Compile out of date", "Compile all", "Simulate", "End simulation"]} /></Group>
        <Group>
          <Tools names={["Restart", "Environment up", "Back", "Forward"]} /><Sep /><Tools names={["Run length"]} />
          <input aria-label="Run length" defaultValue="100 ps" className="ml-[4px] h-[15px] w-[46px] shrink-0 border-t border-l border-[#999] bg-white pr-[2px] text-right font-['Liberation_Mono',monospace] text-[9px]" />
          <svg width="10" height="14" className="mr-[3px] shrink-0 bg-[#ddd]"><path d="M5 1l3 4H2ZM5 13l3-4H2Z" fill="#111" /></svg>
          <Tools names={["Run", "Continue", "Run all", "Break", "Stop"]} /><Sep /><Tools names={["Profile", "Memory profile", "Pan"]} />
        </Group>
        <Group>
          <Tools names={["Step into", "Step over", "Step out"]} /><Sep />
          <Tools names={["Step into instance"]} /><Caret /><Tools names={["Step over instance", "Step out instance"]} />
        </Group>
        <Group>
          <label htmlFor="layout" className="mx-[4px]">Layout</label>
          <select id="layout" className="h-[14px] w-[93px] appearance-none border-t border-l border-[#888] bg-[#d6d6d6] pl-[1px] font-['Liberation_Mono',monospace] text-[9px] leading-[12px]">
            <option>Simulate</option>
          </select>
          <DropArrow />
          <span className="w-[6px]" />
        </Group>
      </div>

      <div className="flex h-[24px] shrink-0 gap-[2px]">
        <Group>
          <label htmlFor="columns" className="mx-[4px] text-[#909090]">ColumnLayout</label>
          <select id="columns" className="h-[14px] w-[162px] appearance-none border-t border-l border-[#999] bg-[#d6d6d6] pl-[1px] font-['Liberation_Mono',monospace] text-[9px] leading-[12px] text-[#8a8a8a]">
            <option>Default</option>
          </select>
          <DropArrow c="#666" />
          <span className="w-[5px]" />
        </Group>
        <Group>
          <Tools names={["Add layer"]} /><Caret /><Tools names={["Remove layer"]} /><Caret />
          <Tools names={["Edit layer", "Save layer"]} /><Caret /><Tools names={["Load layer"]} />
        </Group>
        <Group><Tools names={["Select", "Zoom area", "Move", "Cursors", "Stretch"]} /><Sep /><Tools names={["Stop wave"]} /></Group>
        <Group><Tools names={["X previous", "X next", "Show X", "X options"]} /></Group>
        <Group>
          <Tools names={["Expand drivers"]} /><Caret c="#666" /><Tools names={["Expand readers"]} /><Caret c="#666" /><Tools names={["Expand both"]} /><Sep />
          <label htmlFor="search" className="mx-[4px] text-[#909090]">Search:</label>
          <input id="search" className="h-[14px] w-[88px] border-t border-l border-[#888] bg-[#d6d6d6]" />
          <DropArrow c="#666" />
          <span className="mx-[3px] flex gap-px"><Tools names={["Find previous", "Find next", "Find options"]} /></span>
        </Group>
        <Group><Tools names={["Insert cursor", "Delete cursor", "Previous transition", "Next transition", "Previous falling", "Next falling", "Previous rising", "Next rising"]} /></Group>
      </div>

      <div className="flex h-[25px] shrink-0 gap-[2px] border-b border-[#ddd]">
        <Group><Tools names={["Zoom in", "Zoom out", "Zoom full", "Zoom cursor", "Zoom range", "Zoom selection"]} /></Group>
        <Group><Tools names={["Wave none", "Wave block", "Wave bars"]} /><Sep /><Tools names={["Pattern", "Edge pair", "Edge rising", "Edge marked"]} /></Group>
        <Group><Tools names={["Inputs", "Outputs", "Inouts", "Internals", "All", "Clear filter"]} /></Group>
      </div>

      <main className="flex min-h-0 flex-1 border-t-2 border-[#b4b4b4] bg-[#d0d0d0]">
        {/* instance tree */}
        <section className="flex w-[128px] shrink-0 flex-col bg-[#d9d9d9]">
          <div className="flex h-[15px] shrink-0 items-center bg-white pr-[2px]">
            <Svg size={13}>{icons["Simulate"]}</Svg>
            <h2 className="whitespace-nowrap">:im - Default</h2>
            <span className="ml-[3px] flex-1"><Dots /></span>
            <PanelButtons />
          </div>
          <div className="flex min-h-0 flex-1">
            <div className="flex min-w-0 flex-1 flex-col bg-white">
              <div className="flex h-[14px] shrink-0 items-center border-b border-[#999]"><FilterBox />Instance</div>
              <ul className="flex min-h-0 flex-1 flex-col overflow-hidden">
                {tree.map((n, i) => (
                  <li key={i} className={n.sel ? "relative flex min-h-0 flex-1 items-center bg-[#dfdfdf] whitespace-nowrap" : "flex min-h-0 flex-1 items-center whitespace-nowrap"}>
                    {Array.from({ length: n.d }, (_, j) => (
                      <span key={j} className="flex w-[14px] shrink-0 justify-center self-stretch">
                        {j > 0 && <span className="border-l border-dotted border-[#999]" />}
                      </span>
                    ))}
                    <span className="relative flex w-[14px] shrink-0 items-center justify-center self-stretch">
                      {n.d > 0 && <span className="absolute inset-y-0 left-[7px] border-l border-dotted border-[#999]" />}
                      <span className="absolute right-0 left-[7px] border-t border-dotted border-[#999]" />
                      {n.k !== "l" && <span className="relative flex"><Expander open={n.k === "o"} /></span>}
                    </span>
                    <span className="mr-[4px] flex w-[12px] shrink-0 justify-center">{n.k === "l" ? <Ball /> : <Cube />}</span>
                    {n.t}
                    {n.sel && <span className="absolute -inset-y-px right-[3px] left-[32px] rounded-[4px] border-2 border-[#f0542c]" />}
                  </li>
                ))}
                <li className="flex h-[3px] shrink-0 overflow-hidden pl-[30px]"><Ball /></li>
              </ul>
            </div>
            <div className="flex w-[11px] shrink-0 flex-col items-center bg-[#c3c3c3]">
              <Arrow d="up" />
              <span className="w-[9px] flex-1 bg-white" />
              <span className="h-[35px]" />
              <Arrow d="down" />
            </div>
          </div>
          <div className="mt-[2px] mr-[12px]"><HBar thumb="h-full w-[14px] bg-white" /></div>
        </section>

        <div className="w-[7px] shrink-0 border-r border-[#aaa] bg-[#cfcfcf]" />

        {/* objects and processes */}
        <div className="flex w-[225px] shrink-0 flex-col">
          <section className="relative flex h-[218px] shrink-0 flex-col bg-[#d9d9d9]">
            <div className="flex h-[15px] shrink-0 items-center bg-white pr-[2px] pl-[2px]">
              <svg viewBox="0 0 13 13" width="13" height="13" className="mr-[3px] shrink-0">
                <path d="M5 1l4 4-4 4-4-4Z" fill="#c020c0" /><path d="M7 4h5v5H7z" fill="#18a070" /><path d="M4 5l4 4-3 3.500L1 9Z" fill="#2040e0" />
              </svg>
              <h2>Objects</h2>
              <Grip />
              <PanelButtons />
            </div>
            <div className="flex min-h-0 flex-1">
              <div className="flex min-w-0 flex-1 flex-col">
                <div className="flex h-[14px] shrink-0 items-center border-b border-[#999] bg-white pl-[2px] whitespace-nowrap">
                  <FilterBox />
                  <span className="w-[109px]">Name</span>
                  <span className="h-full w-[20px] overflow-hidden border-l border-[#aaa] pl-[2px]">Val</span>
                  <span className="flex h-full flex-1 items-center gap-[3px] bg-[#dfe3d8] pl-[2px] text-[#777]">
                    <svg width="9" height="9" className="shrink-0"><path d="M0 1h3v7h-3M9 4.500H4M6 2.500 4 4.500l2 2M9 1v7" stroke="#333" fill="none" /></svg>
                    <span className="ml-[2px] h-[7px] w-[7px] shrink-0 border border-[#a04c00] bg-[#f08000]" />
                    <span>Now</span>
                    <svg width="9" height="9" className="shrink-0"><path d="M9 1H6v7H3M0 4.500h5M3 2.500l2 2-2 2" stroke="#333" fill="none" /></svg>
                  </span>
                  <span className="flex w-[10px] justify-center"><svg width="5" height="8"><path d="M0 0v8l5-4Z" fill="#111" /></svg></span>
                </div>
                <div className="ml-[2px] flex min-h-0 flex-1 flex-col justify-end overflow-hidden bg-[#4f5d8e] pb-[2px]">
                  <table className="w-full table-fixed border-collapse text-[#e6e8f0]">
                    <colgroup><col className="w-[122px]" /><col /></colgroup>
                    <tbody>
                      {objects.map(([n, v, d, p]) => (
                        <tr key={n}>
                          <td className="h-[13px] p-0">
                            <span className={`flex h-[13px] items-center pl-[3px] ${indent[d]}`}>
                              <span className={d ? "ml-[3px] flex" : "flex"}><Expander open={n === "ram"} /></span>
                              <span className="mx-[4px] flex"><Diamond port={p ? "in" : undefined} /></span>
                              {n}
                            </span>
                          </td>
                          <td className="h-[13px] overflow-hidden p-0 pl-[2px] whitespace-nowrap">{v}</td>
                        </tr>
                      ))}
                    </tbody>
                  </table>
                </div>
              </div>
              <div className="ml-[3px] flex w-[11px] shrink-0 flex-col items-center bg-[#c3c3c3]">
                <Arrow d="up" />
                <span className="flex-3" />
                <span className="w-[9px] flex-2 bg-white" />
                <Arrow d="down" />
              </div>
            </div>
            <div className="mt-[3px] mr-[12px] mb-[2px] ml-[2px]"><HBar thumb="h-full w-[60px] bg-white" /></div>
            <span className="pointer-events-none absolute top-[67px] right-[6px] left-[1px] h-[75px] rounded-[4px] border-2 border-[#f0542c]" />
          </section>

          <section className="mt-[4px] flex min-h-0 flex-1 flex-col border-t border-[#bbb] bg-[#d9d9d9]">
            <div className="flex h-[15px] shrink-0 items-center bg-white pr-[2px] pl-[2px]">
              <svg viewBox="0 0 14 14" width="13" height="13" className="mr-[3px] shrink-0">
                <circle cx="7" cy="7" r="5.500" fill="#4a78b0" stroke="#33506e" strokeWidth="2" strokeDasharray="2 1.400" />
                <circle cx="7" cy="7" r="4.600" fill="#5585bd" /><circle cx="7" cy="7" r="2" fill="#dce6f2" />
              </svg>
              <h2 className="whitespace-nowrap">Processes (Active)</h2>
              <Grip />
              <PanelButtons />
            </div>
            <div className="flex min-h-0 flex-1">
              <div className="flex min-w-0 flex-1 flex-col">
                <div className="flex h-[13px] shrink-0 items-center border-b border-[#999] bg-white pl-[2px] whitespace-nowrap">
                  <FilterBox />
                  <span className="flex-1">Name</span>
                  <span className="h-full w-[68px] border-l border-[#aaa] pl-[2px] leading-[12px]">Type (filtered)</span>
                </div>
                <div className="ml-[2px] min-h-0 flex-1 overflow-hidden bg-[#8aa0ff] pt-[2px]">
                  <table className="w-full table-fixed border-collapse text-[#f0f3ff]">
                    <colgroup><col className="w-[142px]" /><col /></colgroup>
                    <tbody>
                      {processes.map((p) => (
                        <tr key={p}>
                          <td className="h-[13px] p-0"><span className="flex h-[13px] items-center gap-[4px] pl-[15px]"><Ball />#ALWAYS#{p}</span></td>
                          <td className="h-[13px] p-0 pl-[2px]">Always</td>
                        </tr>
                      ))}
                    </tbody>
                  </table>
                </div>
              </div>
              <div className="ml-[3px] flex w-[11px] shrink-0 flex-col items-center bg-[#c3c3c3]">
                <Arrow d="up" />
                <span className="w-[9px] flex-1 bg-white" />
                <span className="h-[4px]" />
              </div>
            </div>
          </section>
        </div>

        <div className="w-[8px] shrink-0 border-x border-[#aaa] bg-[#d9d9d9]" />

        {/* wave window */}
        <section className="flex min-w-0 flex-1 flex-col overflow-hidden bg-[#808080]">
          <div className="flex h-[15px] shrink-0 items-center bg-[#5d6cb2] text-[#eef0ff]">
            <svg width="12" height="12" className="mr-[4px] shrink-0"><path d="M0 0h12v12H0z" fill="#e8e8e8" /><path d="M0 3h12v9H0z" fill="#000" /><path d="M1 7h3V5h3v4h4" stroke="#00c850" fill="none" /></svg>
            <h2 className="whitespace-nowrap">Wave - Default</h2>
            <Grip light />
            <span className="-mr-[7px]"><PanelButtons /></span>
          </div>
          <div className="flex min-h-0 flex-1 border-t border-[#ddd] text-[#f0f0f0]">
            <div className="flex w-[149px] shrink-0 flex-col border-r-2 border-[#e4e4e4]">
              <div className="flex h-[16px] shrink-0 items-end border-b-2 border-[#e4e4e4] pl-[7px]">
                <span className="flex h-[13px] w-[23px] items-center gap-[2px] border border-[#e4e4e4] border-b-0 pl-[2px]">
                  <svg width="12" height="11"><path d="M5 0l4 5H1Z" fill="#d020d0" /><path d="M7 3h5v6H7z" fill="#18a040" /><path d="M0 7l4-3 3 3-3 4Z" fill="#2030f0" /><circle cx="7" cy="6" r="3" fill="#30a8f0" /></svg>
                  <Caret />
                </span>
              </div>
              <div className="flex min-h-0 flex-1 border-b-2 border-[#e4e4e4]">
                <span className="w-[6px] shrink-0 bg-white" />
                <ul className="flex flex-1 flex-col pt-px">
                  {signals.map((s, i) => (
                    <li key={i} className="flex min-h-0 flex-1 items-center whitespace-nowrap">
                      <span className="flex w-[15px] shrink-0 justify-center">{s.x && <Expander />}</span>
                      <span className="mr-[4px] flex"><Diamond port={s.port} /></span>
                      {s.n}
                    </li>
                  ))}
                </ul>
              </div>
              <div className="flex h-[18px] shrink-0 items-center pl-[8px]">
                <svg width="32" height="10" className="shrink-0"><path d="M0 8l3-6h5v6Z" fill="#6c7680" stroke="#bcc4cc" /><path d="M11 1h8v6h-8z" fill="#b8d0f4" stroke="#6a90d0" /><circle cx="26" cy="5" r="4" fill="#40a848" /><path d="M26 3v4M24 5h4" stroke="#fff" /></svg>
                <span className="flex h-full flex-1 items-center justify-end bg-white pr-[5px] text-[#222]">Now</span>
              </div>
              <div className="flex h-[15px] shrink-0 items-center border-b-2 border-[#e4e4e4] pl-[8px]">
                <svg width="32" height="10" className="shrink-0"><path d="M1 4h7v5H1z" fill="#f0b040" /><path d="M2 4q0-3 2.500-3T7 3" stroke="#d8d8d8" fill="none" /><path d="M12 9l6-7" stroke="#88a8e0" strokeWidth="2" /><circle cx="26" cy="5" r="4" fill="#e04838" /><path d="M24 5h4" stroke="#fff" /></svg>
                <span className="flex-1 pr-[5px] text-right">Cursor 1</span>
              </div>
              <div className="pl-[6px]"><HBar thumb="h-full w-[71px] bg-white" /></div>
            </div>

            <div className="flex w-[78px] shrink-0 flex-col border-r-2 border-[#e4e4e4]">
              <div className="flex h-[16px] shrink-0 items-center justify-end border-b-2 border-[#e4e4e4] pr-[2px]">Msgs</div>
              <ul className="flex min-h-0 flex-1 flex-col border-b-2 border-[#e4e4e4] pt-px pl-[2px]">
                {signals.map((s, i) => (
                  <li key={i} className="flex min-h-0 flex-1 items-center whitespace-nowrap">{s.v}</li>
                ))}
              </ul>
              <div className="flex h-[18px] shrink-0 items-center justify-end bg-white pr-[5px] text-[#222]">650 ns</div>
              <div className="flex h-[15px] shrink-0 items-center justify-end border-b-2 border-[#e4e4e4] pr-[5px]">0.00 ns</div>
              <HBar thumb="ml-[1px] h-full w-[41px] bg-white" />
            </div>

            <div className="ml-[1px] flex min-w-0 flex-1 flex-col bg-black">
              <div className="h-[16px] shrink-0 border-b-2 border-[#e4e4e4]"><span className="ml-[1px] block h-full w-px bg-[#a88c00]" /></div>
              <div className="min-h-0 flex-1 overflow-hidden border-b-2 border-[#e4e4e4]"><Waves /></div>
              <div className="h-[18px] shrink-0 overflow-hidden border-b border-[#888]"><Ruler /></div>
              <div className="flex h-[15px] shrink-0 border-b-2 border-[#e4e4e4] pl-px">
                <span className="flex items-center border border-[#b89800] px-[2px] text-[#d4b000]">0.00 ns</span>
              </div>
              <HBar thumb="h-full w-full bg-white" />
            </div>
            <div className="w-[3px] shrink-0 border-l-2 border-[#e4e4e4] bg-[#c3c3c3]" />
          </div>
        </section>
      </main>
    </div>
  );
}
